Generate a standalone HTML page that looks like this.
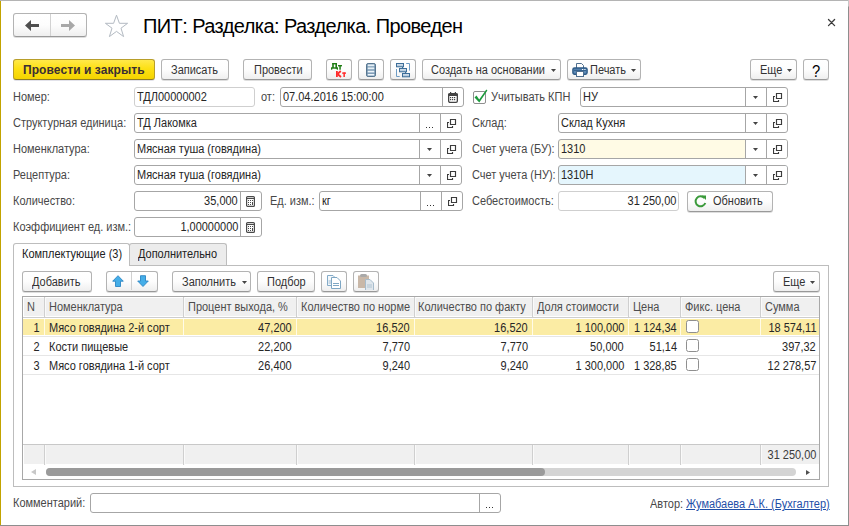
<!DOCTYPE html><html><head><meta charset="utf-8"><style>
html,body{margin:0;padding:0;background:#fff;}
body{width:849px;height:526px;overflow:hidden;position:relative;font-family:'Liberation Sans', sans-serif;}
</style></head><body>
<div style="position:absolute;left:0px;top:0px;width:849px;height:1px;background:#b4b4b4;"></div>
<div style="position:absolute;left:0px;top:1px;width:1px;height:525px;background:#c2a300;"></div>
<div style="position:absolute;left:848px;top:0px;width:1px;height:526px;background:linear-gradient(#c8c8c8 0px,#c8c8c8 6px,#8e8e8e 7px,#8e8e8e 100%);"></div>
<div style="position:absolute;left:0px;top:525px;width:849px;height:1px;background:#8e8e8e;"></div>
<div style="position:absolute;left:13px;top:13px;width:74px;height:24px;box-sizing:border-box;border:1px solid #b3b3b3;border-bottom-color:#999;border-radius:3px;background:linear-gradient(#ffffff 0%,#fdfdfd 50%,#efefef 100%);box-shadow:0 1px 0 #dedede;"></div>
<div style="position:absolute;left:50px;top:14px;width:1px;height:22px;background:#d2d2d2;"></div>
<svg style="position:absolute;left:25px;top:20px" width="14" height="11" viewBox="0 0 14 11"><path d="M0 5.5L6 0V4H14V7H6V11Z" fill="#4f4f4f"/></svg>
<svg style="position:absolute;left:61px;top:20px" width="14" height="11" viewBox="0 0 14 11"><path d="M14 5.5L8 0V4H0V7H8V11Z" fill="#a8a8a8"/></svg>
<svg style="position:absolute;left:104px;top:14px" width="26" height="24" viewBox="0 0 26 24"><path d="M12.5 1.2L15.4 9.3H23.6L17 14.2L19.6 22.6L12.5 17.4L5.4 22.6L8 14.2L1.4 9.3H9.6Z" fill="none" stroke="#b3bac2" stroke-width="1"/></svg>
<div style="position:absolute;left:143px;top:16px;font-size:20px;line-height:20px;color:#000;font-weight:400;letter-spacing:-0.58px;white-space:nowrap;transform-origin:left top;">ПИТ: Разделка: Разделка. Проведен</div>
<svg style="position:absolute;left:827px;top:18px" width="10" height="10" viewBox="0 0 10 10"><path d="M1.5 1.5L7.6 7.6M7.6 1.5L1.5 7.6" stroke="#3a3a3a" stroke-width="1.3" stroke-linecap="round"/></svg>
<div style="position:absolute;left:13px;top:59px;width:142px;height:21px;box-sizing:border-box;border:1px solid #b89e2a;border-bottom-color:#8f7d22;border-radius:3px;background:linear-gradient(#ffe94a 0%,#fde014 45%,#f5d400 100%);box-shadow:0 1px 0 #e2e2ea;"></div>
<div style="position:absolute;left:23px;top:64px;font-size:12px;line-height:12px;color:#3a2e34;font-weight:700;letter-spacing:0.08px;white-space:nowrap;transform-origin:left top;">Провести и закрыть</div>
<div style="position:absolute;left:161px;top:59px;width:68px;height:21px;box-sizing:border-box;border:1px solid #b3b3b3;border-bottom-color:#999;border-radius:3px;background:linear-gradient(#ffffff 0%,#fdfdfd 50%,#efefef 100%);box-shadow:0 1px 0 #dedede;"></div>
<div style="position:absolute;left:171px;top:64px;font-size:12px;line-height:12px;color:#333;font-weight:400;letter-spacing:0px;white-space:nowrap;transform:scaleX(0.915);transform-origin:left top;">Записать</div>
<div style="position:absolute;left:243px;top:59px;width:69px;height:21px;box-sizing:border-box;border:1px solid #b3b3b3;border-bottom-color:#999;border-radius:3px;background:linear-gradient(#ffffff 0%,#fdfdfd 50%,#efefef 100%);box-shadow:0 1px 0 #dedede;"></div>
<div style="position:absolute;left:254px;top:64px;font-size:12px;line-height:12px;color:#333;font-weight:400;letter-spacing:0px;white-space:nowrap;transform:scaleX(0.915);transform-origin:left top;">Провести</div>
<div style="position:absolute;left:326px;top:59px;width:26px;height:21px;box-sizing:border-box;border:1px solid #b3b3b3;border-bottom-color:#999;border-radius:3px;background:linear-gradient(#ffffff 0%,#fdfdfd 50%,#efefef 100%);box-shadow:0 1px 0 #dedede;"></div>
<svg style="position:absolute;left:330px;top:62px" width="22" height="16" viewBox="0 0 22 16"><g fill="#1f7d14"><rect x="2.3" y="1" width="4.6" height="1.4"/><rect x="2.2" y="1" width="1.6" height="5"/><rect x="5.4" y="1" width="1.6" height="5.5"/><rect x="1" y="5.3" width="7" height="1.4"/><rect x="1" y="6" width="1.3" height="1.7"/><rect x="6.7" y="6" width="1.3" height="1.7"/><rect x="8" y="3" width="4" height="1.4"/><rect x="9.3" y="3" width="1.5" height="4.7"/></g><g fill="#ff2b2b"><rect x="6" y="9" width="1.8" height="6"/><path d="M7.5 12L10.8 9M7.5 12L11 15" stroke="#ff2b2b" stroke-width="1.8"/><rect x="12.2" y="10.4" width="3.8" height="1.4"/><rect x="13.4" y="10.4" width="1.5" height="4.6"/></g></svg>
<div style="position:absolute;left:358px;top:59px;width:26px;height:21px;box-sizing:border-box;border:1px solid #b3b3b3;border-bottom-color:#999;border-radius:3px;background:linear-gradient(#ffffff 0%,#fdfdfd 50%,#efefef 100%);box-shadow:0 1px 0 #dedede;"></div>
<svg style="position:absolute;left:366px;top:63px" width="10" height="14" viewBox="0 0 10 14"><rect x="0.5" y="0.5" width="9" height="13" rx="1.6" fill="#6f8fab" stroke="#56758f"/><g fill="#d3e2ee"><rect x="1.6" y="1.5" width="6.8" height="1.9"/><rect x="1.6" y="4.5" width="6.8" height="1.9"/><rect x="1.6" y="7.7" width="6.8" height="1.9"/><rect x="1.6" y="10.8" width="6.8" height="1.9"/></g><g fill="#f2f8fc"><rect x="2" y="1.7" width="6" height="0.9"/><rect x="2" y="4.7" width="6" height="0.9"/><rect x="2" y="7.9" width="6" height="0.9"/><rect x="2" y="11" width="6" height="0.9"/></g></svg>
<div style="position:absolute;left:390px;top:59px;width:26px;height:21px;box-sizing:border-box;border:1px solid #b3b3b3;border-bottom-color:#999;border-radius:3px;background:linear-gradient(#ffffff 0%,#fdfdfd 50%,#efefef 100%);box-shadow:0 1px 0 #dedede;"></div>
<svg style="position:absolute;left:395px;top:63px" width="16" height="15" viewBox="0 0 16 15"><defs><linearGradient id="sg" x1="0" y1="0" x2="0" y2="1"><stop offset="0" stop-color="#dfe9f2"/><stop offset="1" stop-color="#a4bdd3"/></linearGradient></defs><path d="M11.2 0.5H14.5V7.6M1.5 6V13.5H4.7" fill="none" stroke="#6e9cc4"/><path d="M7.5 4V5M10.5 9V10" stroke="#3d6e99"/><rect x="1.5" y="0.5" width="7" height="3.3" fill="url(#sg)" stroke="#3d6e99"/><rect x="4.5" y="5.5" width="7" height="3.3" fill="url(#sg)" stroke="#3d6e99"/><rect x="7.5" y="10.5" width="7" height="3.3" fill="url(#sg)" stroke="#3d6e99"/></svg>
<div style="position:absolute;left:422px;top:59px;width:139px;height:21px;box-sizing:border-box;border:1px solid #b3b3b3;border-bottom-color:#999;border-radius:3px;background:linear-gradient(#ffffff 0%,#fdfdfd 50%,#efefef 100%);box-shadow:0 1px 0 #dedede;"></div>
<div style="position:absolute;left:431px;top:64px;font-size:12px;line-height:12px;color:#333;font-weight:400;letter-spacing:0px;white-space:nowrap;transform:scaleX(0.915);transform-origin:left top;">Создать на основании</div>
<svg style="position:absolute;left:551px;top:69px" width="5" height="3" viewBox="0 0 5 3"><path d="M0 0H5L2.5 3Z" fill="#444"/></svg>
<div style="position:absolute;left:567px;top:59px;width:74px;height:21px;box-sizing:border-box;border:1px solid #b3b3b3;border-bottom-color:#999;border-radius:3px;background:linear-gradient(#ffffff 0%,#fdfdfd 50%,#efefef 100%);box-shadow:0 1px 0 #dedede;"></div>
<svg style="position:absolute;left:572px;top:63px" width="16" height="14" viewBox="0 0 16 14"><path d="M4.5 5V0.5H9.5L11.5 2.5V5" fill="#fff" stroke="#4f6f8f"/><rect x="0.9" y="5" width="14.2" height="6.2" rx="1.6" fill="#5c89b6" stroke="#2d5a86" stroke-width="1.4"/><path d="M2 7.3H14" stroke="#2d5a86"/><rect x="10" y="6" width="1.2" height="1" fill="#fff"/><rect x="12.3" y="6" width="1.2" height="1" fill="#fff"/><rect x="4.5" y="8.5" width="7" height="5" fill="#fff" stroke="#4f6f8f"/></svg>
<div style="position:absolute;left:590px;top:64px;font-size:12px;line-height:12px;color:#333;font-weight:400;letter-spacing:0px;white-space:nowrap;transform:scaleX(0.915);transform-origin:left top;">Печать</div>
<svg style="position:absolute;left:631px;top:69px" width="5" height="3" viewBox="0 0 5 3"><path d="M0 0H5L2.5 3Z" fill="#444"/></svg>
<div style="position:absolute;left:750px;top:59px;width:47px;height:21px;box-sizing:border-box;border:1px solid #b3b3b3;border-bottom-color:#999;border-radius:3px;background:linear-gradient(#ffffff 0%,#fdfdfd 50%,#efefef 100%);box-shadow:0 1px 0 #dedede;"></div>
<div style="position:absolute;left:760px;top:64px;font-size:12px;line-height:12px;color:#333;font-weight:400;letter-spacing:0px;white-space:nowrap;transform:scaleX(0.915);transform-origin:left top;">Еще</div>
<svg style="position:absolute;left:787px;top:69px" width="5" height="3" viewBox="0 0 5 3"><path d="M0 0H5L2.5 3Z" fill="#444"/></svg>
<div style="position:absolute;left:803px;top:59px;width:26px;height:21px;box-sizing:border-box;border:1px solid #b3b3b3;border-bottom-color:#999;border-radius:3px;background:linear-gradient(#ffffff 0%,#fdfdfd 50%,#efefef 100%);box-shadow:0 1px 0 #dedede;"></div>
<div style="position:absolute;left:812px;top:64px;font-size:16px;line-height:16px;color:#000;font-weight:400;letter-spacing:0px;white-space:nowrap;transform:scaleX(0.92);transform-origin:left top;">?</div>
<div style="position:absolute;left:13px;top:91px;font-size:12px;line-height:12px;color:#474747;font-weight:400;letter-spacing:0px;white-space:nowrap;transform:scaleX(0.915);transform-origin:left top;">Номер:</div>
<div style="position:absolute;left:134px;top:87px;width:121px;height:20px;box-sizing:border-box;border:1px solid #cfcfcf;border-radius:3px;background:#fff;"></div>
<div style="position:absolute;left:137px;top:91px;font-size:12px;line-height:12px;color:#262626;font-weight:400;letter-spacing:0px;white-space:nowrap;transform:scaleX(0.915);transform-origin:left top;">ТДЛ00000002</div>
<div style="position:absolute;left:261px;top:91px;font-size:12px;line-height:12px;color:#474747;font-weight:400;letter-spacing:0px;white-space:nowrap;transform:scaleX(0.915);transform-origin:left top;">от:</div>
<div style="position:absolute;left:280px;top:87px;width:184px;height:20px;box-sizing:border-box;border:1px solid #a6a6a6;border-radius:3px;background:#fff;"></div>
<div style="position:absolute;left:442px;top:87px;width:1px;height:20px;background:#a6a6a6;"></div>
<svg style="position:absolute;left:448px;top:92px" width="10" height="11" viewBox="0 0 10 11"><rect x="0.65" y="1.65" width="8.7" height="8.7" rx="1.3" fill="#fff" stroke="#444" stroke-width="1.3"/><rect x="0" y="1.5" width="10" height="2.5" rx="1" fill="#444"/><rect x="2" y="0" width="1.2" height="2" fill="#444"/><rect x="6.8" y="0" width="1.2" height="2" fill="#444"/><rect x="2" y="5" width="1.2" height="1.2" fill="#444"/><rect x="4" y="5" width="1.2" height="1.2" fill="#444"/><rect x="6" y="5" width="1.2" height="1.2" fill="#444"/><rect x="2" y="7" width="1.2" height="1.2" fill="#444"/><rect x="4" y="7" width="1.2" height="1.2" fill="#444"/><rect x="6" y="7" width="1.2" height="1.2" fill="#444"/></svg>
<div style="position:absolute;left:283px;top:91px;font-size:12px;line-height:12px;color:#262626;font-weight:400;letter-spacing:0px;white-space:nowrap;transform:scaleX(0.915);transform-origin:left top;">07.04.2016 15:00:00</div>
<div style="position:absolute;left:473px;top:91px;width:13px;height:13px;box-sizing:border-box;border:1px solid #8f8f8f;border-radius:2px;background:#fff;"></div>
<svg style="position:absolute;left:474px;top:88px" width="14" height="15" viewBox="0 0 14 15"><path d="M0.5 9.4L5.3 14.4L13.4 2.6L12.3 1.6L5.2 11.4L2.5 7.6Z" fill="#1b9a3c"/></svg>
<div style="position:absolute;left:491px;top:91px;font-size:12px;line-height:12px;color:#474747;font-weight:400;letter-spacing:0px;white-space:nowrap;transform:scaleX(0.915);transform-origin:left top;">Учитывать КПН</div>
<div style="position:absolute;left:580px;top:87px;width:208px;height:20px;box-sizing:border-box;border:1px solid #a6a6a6;border-radius:3px;background:#fff;"></div>
<div style="position:absolute;left:766px;top:87px;width:1px;height:20px;background:#a6a6a6;"></div>
<svg style="position:absolute;left:773px;top:93px" width="10" height="10" viewBox="0 0 10 10"><path d="M3.5 0.5H8.5V5.5H3.5Z" fill="none" stroke="#3c3c3c" stroke-width="1.15"/><path d="M2 3.5H0.5V8.5H5.5V7" fill="none" stroke="#3c3c3c" stroke-width="1.15"/></svg>
<div style="position:absolute;left:745px;top:87px;width:1px;height:20px;background:#a6a6a6;"></div>
<svg style="position:absolute;left:753px;top:96px" width="5" height="3" viewBox="0 0 5 3"><path d="M0 0H5L2.5 3Z" fill="#444"/></svg>
<div style="position:absolute;left:583px;top:91px;font-size:12px;line-height:12px;color:#262626;font-weight:400;letter-spacing:0px;white-space:nowrap;transform:scaleX(0.915);transform-origin:left top;">НУ</div>
<div style="position:absolute;left:13px;top:117px;font-size:12px;line-height:12px;color:#474747;font-weight:400;letter-spacing:0px;white-space:nowrap;transform:scaleX(0.915);transform-origin:left top;">Структурная единица:</div>
<div style="position:absolute;left:134px;top:113px;width:328px;height:20px;box-sizing:border-box;border:1px solid #a6a6a6;border-radius:3px;background:#fff;"></div>
<div style="position:absolute;left:440px;top:113px;width:1px;height:20px;background:#a6a6a6;"></div>
<svg style="position:absolute;left:447px;top:119px" width="10" height="10" viewBox="0 0 10 10"><path d="M3.5 0.5H8.5V5.5H3.5Z" fill="none" stroke="#3c3c3c" stroke-width="1.15"/><path d="M2 3.5H0.5V8.5H5.5V7" fill="none" stroke="#3c3c3c" stroke-width="1.15"/></svg>
<div style="position:absolute;left:419px;top:113px;width:1px;height:20px;background:#a6a6a6;"></div>
<svg style="position:absolute;left:426px;top:127px" width="9" height="2" viewBox="0 0 9 2"><rect x="0" y="0" width="1" height="1" fill="#333"/><rect x="3" y="0" width="1" height="1" fill="#333"/><rect x="6" y="0" width="1" height="1" fill="#333"/></svg>
<div style="position:absolute;left:137px;top:117px;font-size:12px;line-height:12px;color:#262626;font-weight:400;letter-spacing:0px;white-space:nowrap;transform:scaleX(0.915);transform-origin:left top;">ТД Лакомка</div>
<div style="position:absolute;left:472px;top:117px;font-size:12px;line-height:12px;color:#474747;font-weight:400;letter-spacing:0px;white-space:nowrap;transform:scaleX(0.915);transform-origin:left top;">Склад:</div>
<div style="position:absolute;left:558px;top:113px;width:230px;height:20px;box-sizing:border-box;border:1px solid #a6a6a6;border-radius:3px;background:#fff;"></div>
<div style="position:absolute;left:766px;top:113px;width:1px;height:20px;background:#a6a6a6;"></div>
<svg style="position:absolute;left:773px;top:119px" width="10" height="10" viewBox="0 0 10 10"><path d="M3.5 0.5H8.5V5.5H3.5Z" fill="none" stroke="#3c3c3c" stroke-width="1.15"/><path d="M2 3.5H0.5V8.5H5.5V7" fill="none" stroke="#3c3c3c" stroke-width="1.15"/></svg>
<div style="position:absolute;left:745px;top:113px;width:1px;height:20px;background:#a6a6a6;"></div>
<svg style="position:absolute;left:753px;top:122px" width="5" height="3" viewBox="0 0 5 3"><path d="M0 0H5L2.5 3Z" fill="#444"/></svg>
<div style="position:absolute;left:561px;top:117px;font-size:12px;line-height:12px;color:#262626;font-weight:400;letter-spacing:0px;white-space:nowrap;transform:scaleX(0.915);transform-origin:left top;">Склад Кухня</div>
<div style="position:absolute;left:13px;top:143px;font-size:12px;line-height:12px;color:#474747;font-weight:400;letter-spacing:0px;white-space:nowrap;transform:scaleX(0.915);transform-origin:left top;">Номенклатура:</div>
<div style="position:absolute;left:134px;top:139px;width:328px;height:20px;box-sizing:border-box;border:1px solid #a6a6a6;border-radius:3px;background:#fff;"></div>
<div style="position:absolute;left:440px;top:139px;width:1px;height:20px;background:#a6a6a6;"></div>
<svg style="position:absolute;left:447px;top:145px" width="10" height="10" viewBox="0 0 10 10"><path d="M3.5 0.5H8.5V5.5H3.5Z" fill="none" stroke="#3c3c3c" stroke-width="1.15"/><path d="M2 3.5H0.5V8.5H5.5V7" fill="none" stroke="#3c3c3c" stroke-width="1.15"/></svg>
<div style="position:absolute;left:419px;top:139px;width:1px;height:20px;background:#a6a6a6;"></div>
<svg style="position:absolute;left:427px;top:148px" width="5" height="3" viewBox="0 0 5 3"><path d="M0 0H5L2.5 3Z" fill="#444"/></svg>
<div style="position:absolute;left:137px;top:143px;font-size:12px;line-height:12px;color:#262626;font-weight:400;letter-spacing:0px;white-space:nowrap;transform:scaleX(0.915);transform-origin:left top;">Мясная туша (говядина)</div>
<div style="position:absolute;left:472px;top:143px;font-size:12px;line-height:12px;color:#474747;font-weight:400;letter-spacing:0px;white-space:nowrap;transform:scaleX(0.915);transform-origin:left top;">Счет учета (БУ):</div>
<div style="position:absolute;left:558px;top:139px;width:230px;height:20px;box-sizing:border-box;border:1px solid #a6a6a6;border-radius:3px;background:#fff;background:#fffbe5;"></div>
<div style="position:absolute;left:745px;top:140px;width:42px;height:18px;background:#fff;border-radius:0 2px 2px 0;"></div>
<div style="position:absolute;left:766px;top:139px;width:1px;height:20px;background:#a6a6a6;"></div>
<svg style="position:absolute;left:773px;top:145px" width="10" height="10" viewBox="0 0 10 10"><path d="M3.5 0.5H8.5V5.5H3.5Z" fill="none" stroke="#3c3c3c" stroke-width="1.15"/><path d="M2 3.5H0.5V8.5H5.5V7" fill="none" stroke="#3c3c3c" stroke-width="1.15"/></svg>
<div style="position:absolute;left:745px;top:139px;width:1px;height:20px;background:#a6a6a6;"></div>
<svg style="position:absolute;left:753px;top:148px" width="5" height="3" viewBox="0 0 5 3"><path d="M0 0H5L2.5 3Z" fill="#444"/></svg>
<div style="position:absolute;left:561px;top:143px;font-size:12px;line-height:12px;color:#262626;font-weight:400;letter-spacing:0px;white-space:nowrap;transform:scaleX(0.915);transform-origin:left top;">1310</div>
<div style="position:absolute;left:13px;top:169px;font-size:12px;line-height:12px;color:#474747;font-weight:400;letter-spacing:0px;white-space:nowrap;transform:scaleX(0.915);transform-origin:left top;">Рецептура:</div>
<div style="position:absolute;left:134px;top:165px;width:328px;height:20px;box-sizing:border-box;border:1px solid #a6a6a6;border-radius:3px;background:#fff;"></div>
<div style="position:absolute;left:440px;top:165px;width:1px;height:20px;background:#a6a6a6;"></div>
<svg style="position:absolute;left:447px;top:171px" width="10" height="10" viewBox="0 0 10 10"><path d="M3.5 0.5H8.5V5.5H3.5Z" fill="none" stroke="#3c3c3c" stroke-width="1.15"/><path d="M2 3.5H0.5V8.5H5.5V7" fill="none" stroke="#3c3c3c" stroke-width="1.15"/></svg>
<div style="position:absolute;left:419px;top:165px;width:1px;height:20px;background:#a6a6a6;"></div>
<svg style="position:absolute;left:427px;top:174px" width="5" height="3" viewBox="0 0 5 3"><path d="M0 0H5L2.5 3Z" fill="#444"/></svg>
<div style="position:absolute;left:137px;top:169px;font-size:12px;line-height:12px;color:#262626;font-weight:400;letter-spacing:0px;white-space:nowrap;transform:scaleX(0.915);transform-origin:left top;">Мясная туша (говядина)</div>
<div style="position:absolute;left:472px;top:169px;font-size:12px;line-height:12px;color:#474747;font-weight:400;letter-spacing:0px;white-space:nowrap;transform:scaleX(0.915);transform-origin:left top;">Счет учета (НУ):</div>
<div style="position:absolute;left:558px;top:165px;width:230px;height:20px;box-sizing:border-box;border:1px solid #a6a6a6;border-radius:3px;background:#fff;background:#e5f6fd;"></div>
<div style="position:absolute;left:745px;top:166px;width:42px;height:18px;background:#fff;border-radius:0 2px 2px 0;"></div>
<div style="position:absolute;left:766px;top:165px;width:1px;height:20px;background:#a6a6a6;"></div>
<svg style="position:absolute;left:773px;top:171px" width="10" height="10" viewBox="0 0 10 10"><path d="M3.5 0.5H8.5V5.5H3.5Z" fill="none" stroke="#3c3c3c" stroke-width="1.15"/><path d="M2 3.5H0.5V8.5H5.5V7" fill="none" stroke="#3c3c3c" stroke-width="1.15"/></svg>
<div style="position:absolute;left:745px;top:165px;width:1px;height:20px;background:#a6a6a6;"></div>
<svg style="position:absolute;left:753px;top:174px" width="5" height="3" viewBox="0 0 5 3"><path d="M0 0H5L2.5 3Z" fill="#444"/></svg>
<div style="position:absolute;left:561px;top:169px;font-size:12px;line-height:12px;color:#262626;font-weight:400;letter-spacing:0px;white-space:nowrap;transform:scaleX(0.915);transform-origin:left top;">1310Н</div>
<div style="position:absolute;left:13px;top:195px;font-size:12px;line-height:12px;color:#474747;font-weight:400;letter-spacing:0px;white-space:nowrap;transform:scaleX(0.915);transform-origin:left top;">Количество:</div>
<div style="position:absolute;left:134px;top:191px;width:128px;height:20px;box-sizing:border-box;border:1px solid #a6a6a6;border-radius:3px;background:#fff;"></div>
<div style="position:absolute;left:240px;top:191px;width:1px;height:20px;background:#a6a6a6;"></div>
<svg style="position:absolute;left:246px;top:196px" width="10" height="11" viewBox="0 0 10 11"><rect x="0.6" y="0.6" width="7.8" height="9.8" rx="1" fill="#fff" stroke="#4a4a4a" stroke-width="1.2"/><path d="M1 2.5H8" stroke="#4a4a4a" stroke-width="1"/><rect x="2" y="4" width="1" height="1" fill="#4a4a4a"/><rect x="4" y="4" width="1" height="1" fill="#4a4a4a"/><rect x="6" y="4" width="1" height="1" fill="#4a4a4a"/><rect x="2" y="6" width="1" height="1" fill="#4a4a4a"/><rect x="4" y="6" width="1" height="1" fill="#4a4a4a"/><rect x="2" y="8" width="1" height="1" fill="#4a4a4a"/><rect x="4" y="8" width="1" height="1" fill="#4a4a4a"/><rect x="6" y="6" width="1" height="3" fill="#4a4a4a"/></svg>
<div style="position:absolute;right:611px;top:195px;font-size:12px;line-height:12px;color:#262626;font-weight:400;letter-spacing:0px;white-space:nowrap;text-align:right;transform:scaleX(0.915);transform-origin:right top;">35,000</div>
<div style="position:absolute;left:270px;top:195px;font-size:12px;line-height:12px;color:#474747;font-weight:400;letter-spacing:0px;white-space:nowrap;transform:scaleX(0.915);transform-origin:left top;">Ед. изм.:</div>
<div style="position:absolute;left:319px;top:191px;width:144px;height:20px;box-sizing:border-box;border:1px solid #a6a6a6;border-radius:3px;background:#fff;"></div>
<div style="position:absolute;left:441px;top:191px;width:1px;height:20px;background:#a6a6a6;"></div>
<svg style="position:absolute;left:448px;top:197px" width="10" height="10" viewBox="0 0 10 10"><path d="M3.5 0.5H8.5V5.5H3.5Z" fill="none" stroke="#3c3c3c" stroke-width="1.15"/><path d="M2 3.5H0.5V8.5H5.5V7" fill="none" stroke="#3c3c3c" stroke-width="1.15"/></svg>
<div style="position:absolute;left:420px;top:191px;width:1px;height:20px;background:#a6a6a6;"></div>
<svg style="position:absolute;left:427px;top:205px" width="9" height="2" viewBox="0 0 9 2"><rect x="0" y="0" width="1" height="1" fill="#333"/><rect x="3" y="0" width="1" height="1" fill="#333"/><rect x="6" y="0" width="1" height="1" fill="#333"/></svg>
<div style="position:absolute;left:322px;top:195px;font-size:12px;line-height:12px;color:#262626;font-weight:400;letter-spacing:0px;white-space:nowrap;transform:scaleX(0.915);transform-origin:left top;">кг</div>
<div style="position:absolute;left:472px;top:195px;font-size:12px;line-height:12px;color:#474747;font-weight:400;letter-spacing:0px;white-space:nowrap;transform:scaleX(0.915);transform-origin:left top;">Себестоимость:</div>
<div style="position:absolute;left:558px;top:191px;width:121px;height:20px;box-sizing:border-box;border:1px solid #cfcfcf;border-radius:3px;background:#fff;"></div>
<div style="position:absolute;right:173px;top:195px;font-size:12px;line-height:12px;color:#262626;font-weight:400;letter-spacing:0px;white-space:nowrap;text-align:right;transform:scaleX(0.915);transform-origin:right top;">31 250,00</div>
<div style="position:absolute;left:687px;top:191px;width:86px;height:21px;box-sizing:border-box;border:1px solid #b3b3b3;border-bottom-color:#999;border-radius:3px;background:linear-gradient(#ffffff 0%,#fdfdfd 50%,#efefef 100%);box-shadow:0 1px 0 #dedede;"></div>
<svg style="position:absolute;left:694px;top:195px" width="13" height="13" viewBox="0 0 13 13"><path d="M10.5 3.2A5 5 0 1 0 11.3 8" fill="none" stroke="#3a9a3a" stroke-width="2"/><path d="M7.5 0.5H12V5Z" fill="#3a9a3a"/></svg>
<div style="position:absolute;left:713px;top:195px;font-size:12px;line-height:12px;color:#333;font-weight:400;letter-spacing:0px;white-space:nowrap;transform:scaleX(0.915);transform-origin:left top;">Обновить</div>
<div style="position:absolute;left:13px;top:221px;font-size:12px;line-height:12px;color:#474747;font-weight:400;letter-spacing:0px;white-space:nowrap;transform:scaleX(0.915);transform-origin:left top;">Коэффициент ед. изм.:</div>
<div style="position:absolute;left:134px;top:217px;width:128px;height:20px;box-sizing:border-box;border:1px solid #a6a6a6;border-radius:3px;background:#fff;"></div>
<div style="position:absolute;left:240px;top:217px;width:1px;height:20px;background:#a6a6a6;"></div>
<svg style="position:absolute;left:246px;top:222px" width="10" height="11" viewBox="0 0 10 11"><rect x="0.6" y="0.6" width="7.8" height="9.8" rx="1" fill="#fff" stroke="#4a4a4a" stroke-width="1.2"/><path d="M1 2.5H8" stroke="#4a4a4a" stroke-width="1"/><rect x="2" y="4" width="1" height="1" fill="#4a4a4a"/><rect x="4" y="4" width="1" height="1" fill="#4a4a4a"/><rect x="6" y="4" width="1" height="1" fill="#4a4a4a"/><rect x="2" y="6" width="1" height="1" fill="#4a4a4a"/><rect x="4" y="6" width="1" height="1" fill="#4a4a4a"/><rect x="2" y="8" width="1" height="1" fill="#4a4a4a"/><rect x="4" y="8" width="1" height="1" fill="#4a4a4a"/><rect x="6" y="6" width="1" height="3" fill="#4a4a4a"/></svg>
<div style="position:absolute;right:611px;top:221px;font-size:12px;line-height:12px;color:#262626;font-weight:400;letter-spacing:0px;white-space:nowrap;text-align:right;transform:scaleX(0.915);transform-origin:right top;">1,00000000</div>
<div style="position:absolute;left:13px;top:265px;width:816px;height:222px;box-sizing:border-box;border:1px solid #bdbdbd;background:#fff;"></div>
<div style="position:absolute;left:129px;top:243px;width:98px;height:22px;box-sizing:border-box;border:1px solid #bdbdbd;border-bottom:none;border-radius:3px 3px 0 0;background:#ececec;"></div>
<div style="position:absolute;left:13px;top:243px;width:117px;height:23px;box-sizing:border-box;border:1px solid #bdbdbd;border-bottom:none;border-radius:3px 3px 0 0;background:#fff;"></div>
<div style="position:absolute;left:22px;top:248px;font-size:12px;line-height:12px;color:#222;font-weight:400;letter-spacing:0px;white-space:nowrap;transform:scaleX(0.915);transform-origin:left top;">Комплектующие (3)</div>
<div style="position:absolute;left:138px;top:248px;font-size:12px;line-height:12px;color:#222;font-weight:400;letter-spacing:0px;white-space:nowrap;transform:scaleX(0.915);transform-origin:left top;">Дополнительно</div>
<div style="position:absolute;left:22px;top:271px;width:70px;height:21px;box-sizing:border-box;border:1px solid #b3b3b3;border-bottom-color:#999;border-radius:3px;background:linear-gradient(#ffffff 0%,#fdfdfd 50%,#efefef 100%);box-shadow:0 1px 0 #dedede;"></div>
<div style="position:absolute;left:32px;top:276px;font-size:12px;line-height:12px;color:#333;font-weight:400;letter-spacing:0px;white-space:nowrap;transform:scaleX(0.915);transform-origin:left top;">Добавить</div>
<div style="position:absolute;left:106px;top:271px;width:52px;height:21px;box-sizing:border-box;border:1px solid #b3b3b3;border-bottom-color:#999;border-radius:3px;background:linear-gradient(#ffffff 0%,#fdfdfd 50%,#efefef 100%);box-shadow:0 1px 0 #dedede;"></div>
<div style="position:absolute;left:131px;top:272px;width:1px;height:18px;background:#d0d0d0;"></div>
<svg style="position:absolute;left:112px;top:275px" width="13" height="14" viewBox="0 0 13 14"><path d="M6 0.7L11.3 6.2H8.5V11.5H3.5V6.2H0.7Z" fill="#45aee8" stroke="#2b86c4" stroke-width="0.9"/></svg>
<svg style="position:absolute;left:137px;top:275px" width="13" height="14" viewBox="0 0 13 14"><path d="M6 11.5L11.3 6H8.5V0.7H3.5V6H0.7Z" fill="#45aee8" stroke="#2b86c4" stroke-width="0.9"/></svg>
<div style="position:absolute;left:172px;top:271px;width:79px;height:21px;box-sizing:border-box;border:1px solid #b3b3b3;border-bottom-color:#999;border-radius:3px;background:linear-gradient(#ffffff 0%,#fdfdfd 50%,#efefef 100%);box-shadow:0 1px 0 #dedede;"></div>
<div style="position:absolute;left:182px;top:276px;font-size:12px;line-height:12px;color:#333;font-weight:400;letter-spacing:0px;white-space:nowrap;transform:scaleX(0.915);transform-origin:left top;">Заполнить</div>
<svg style="position:absolute;left:242px;top:281px" width="5" height="3" viewBox="0 0 5 3"><path d="M0 0H5L2.5 3Z" fill="#444"/></svg>
<div style="position:absolute;left:257px;top:271px;width:58px;height:21px;box-sizing:border-box;border:1px solid #b3b3b3;border-bottom-color:#999;border-radius:3px;background:linear-gradient(#ffffff 0%,#fdfdfd 50%,#efefef 100%);box-shadow:0 1px 0 #dedede;"></div>
<div style="position:absolute;left:267px;top:276px;font-size:12px;line-height:12px;color:#333;font-weight:400;letter-spacing:0px;white-space:nowrap;transform:scaleX(0.915);transform-origin:left top;">Подбор</div>
<div style="position:absolute;left:321px;top:271px;width:26px;height:21px;box-sizing:border-box;border:1px solid #b3b3b3;border-bottom-color:#999;border-radius:3px;background:linear-gradient(#ffffff 0%,#fdfdfd 50%,#efefef 100%);box-shadow:0 1px 0 #dedede;"></div>
<svg style="position:absolute;left:327px;top:275px" width="15" height="15" viewBox="0 0 15 15"><path d="M0.5 0.5H6L7.5 2V10.5H0.5Z" fill="#f4f8fb" stroke="#84abc8"/><path d="M1.5 6H4M1.5 8H4" stroke="#9bb9d0"/><path d="M4.5 2.5H10L13.5 6V13.5H4.5Z" fill="#fff" stroke="#7ea7c4"/><path d="M6 8.5H12M6 10.5H12" stroke="#7ea7c4"/></svg>
<div style="position:absolute;left:353px;top:271px;width:26px;height:21px;box-sizing:border-box;border:1px solid #b3b3b3;border-bottom-color:#999;border-radius:3px;background:linear-gradient(#ffffff 0%,#fdfdfd 50%,#efefef 100%);box-shadow:0 1px 0 #dedede;"></div>
<svg style="position:absolute;left:358px;top:274px" width="16" height="16" viewBox="0 0 16 16"><rect x="0" y="1.5" width="11" height="12.5" fill="#c9b8a8"/><rect x="2" y="0" width="7" height="3" rx="1.5" fill="#a9a9a9"/><path d="M7.5 5.5H12L15.5 9V16.5H7.5Z" fill="#dfe6ec" stroke="#a6bccc"/><path d="M9 11H14M9 13H14" stroke="#b0c4d2"/></svg>
<div style="position:absolute;left:773px;top:271px;width:47px;height:21px;box-sizing:border-box;border:1px solid #b3b3b3;border-bottom-color:#999;border-radius:3px;background:linear-gradient(#ffffff 0%,#fdfdfd 50%,#efefef 100%);box-shadow:0 1px 0 #dedede;"></div>
<div style="position:absolute;left:783px;top:276px;font-size:12px;line-height:12px;color:#333;font-weight:400;letter-spacing:0px;white-space:nowrap;transform:scaleX(0.915);transform-origin:left top;">Еще</div>
<svg style="position:absolute;left:810px;top:281px" width="5" height="3" viewBox="0 0 5 3"><path d="M0 0H5L2.5 3Z" fill="#444"/></svg>
<div style="position:absolute;left:22px;top:296px;width:798px;height:184px;box-sizing:border-box;border:1px solid #a8a8a8;background:#fff;"></div>
<div style="position:absolute;left:24px;top:298px;width:795px;height:18px;background:#f0f0f0;"></div>
<div style="position:absolute;left:23px;top:317px;width:796px;height:1px;background:#cdcdcd;"></div>
<div style="position:absolute;left:44px;top:297px;width:1px;height:20px;background:#cfcfcf;"></div>
<div style="position:absolute;left:45px;top:297px;width:1px;height:20px;background:#fafafa;"></div>
<div style="position:absolute;left:183px;top:297px;width:1px;height:20px;background:#cfcfcf;"></div>
<div style="position:absolute;left:184px;top:297px;width:1px;height:20px;background:#fafafa;"></div>
<div style="position:absolute;left:296px;top:297px;width:1px;height:20px;background:#cfcfcf;"></div>
<div style="position:absolute;left:297px;top:297px;width:1px;height:20px;background:#fafafa;"></div>
<div style="position:absolute;left:414px;top:297px;width:1px;height:20px;background:#cfcfcf;"></div>
<div style="position:absolute;left:415px;top:297px;width:1px;height:20px;background:#fafafa;"></div>
<div style="position:absolute;left:532px;top:297px;width:1px;height:20px;background:#cfcfcf;"></div>
<div style="position:absolute;left:533px;top:297px;width:1px;height:20px;background:#fafafa;"></div>
<div style="position:absolute;left:628px;top:297px;width:1px;height:20px;background:#cfcfcf;"></div>
<div style="position:absolute;left:629px;top:297px;width:1px;height:20px;background:#fafafa;"></div>
<div style="position:absolute;left:680px;top:297px;width:1px;height:20px;background:#cfcfcf;"></div>
<div style="position:absolute;left:681px;top:297px;width:1px;height:20px;background:#fafafa;"></div>
<div style="position:absolute;left:760px;top:297px;width:1px;height:20px;background:#cfcfcf;"></div>
<div style="position:absolute;left:761px;top:297px;width:1px;height:20px;background:#fafafa;"></div>
<div style="position:absolute;left:27px;top:301px;font-size:12px;line-height:12px;color:#4d4d4d;font-weight:400;letter-spacing:0px;white-space:nowrap;transform:scaleX(0.915);transform-origin:left top;">N</div>
<div style="position:absolute;left:49px;top:301px;font-size:12px;line-height:12px;color:#4d4d4d;font-weight:400;letter-spacing:0px;white-space:nowrap;transform:scaleX(0.915);transform-origin:left top;">Номенклатура</div>
<div style="position:absolute;left:188px;top:301px;font-size:12px;line-height:12px;color:#4d4d4d;font-weight:400;letter-spacing:0px;white-space:nowrap;transform:scaleX(0.915);transform-origin:left top;">Процент выхода, %</div>
<div style="position:absolute;left:301px;top:301px;font-size:12px;line-height:12px;color:#4d4d4d;font-weight:400;letter-spacing:0px;white-space:nowrap;transform:scaleX(0.915);transform-origin:left top;">Количество по норме</div>
<div style="position:absolute;left:418px;top:301px;font-size:12px;line-height:12px;color:#4d4d4d;font-weight:400;letter-spacing:0px;white-space:nowrap;transform:scaleX(0.915);transform-origin:left top;">Количество по факту</div>
<div style="position:absolute;left:537px;top:301px;font-size:12px;line-height:12px;color:#4d4d4d;font-weight:400;letter-spacing:0px;white-space:nowrap;transform:scaleX(0.915);transform-origin:left top;">Доля стоимости</div>
<div style="position:absolute;left:633px;top:301px;font-size:12px;line-height:12px;color:#4d4d4d;font-weight:400;letter-spacing:0px;white-space:nowrap;transform:scaleX(0.915);transform-origin:left top;">Цена</div>
<div style="position:absolute;left:685px;top:301px;font-size:12px;line-height:12px;color:#4d4d4d;font-weight:400;letter-spacing:0px;white-space:nowrap;transform:scaleX(0.915);transform-origin:left top;">Фикс. цена</div>
<div style="position:absolute;left:765px;top:301px;font-size:12px;line-height:12px;color:#4d4d4d;font-weight:400;letter-spacing:0px;white-space:nowrap;transform:scaleX(0.915);transform-origin:left top;">Сумма</div>
<div style="position:absolute;left:23px;top:319px;width:796px;height:16px;background:#fbeca4;"></div>
<div style="position:absolute;left:44px;top:319px;width:1px;height:16px;background:#fffbe8;"></div>
<div style="position:absolute;left:183px;top:319px;width:1px;height:16px;background:#fffbe8;"></div>
<div style="position:absolute;left:296px;top:319px;width:1px;height:16px;background:#fffbe8;"></div>
<div style="position:absolute;left:414px;top:319px;width:1px;height:16px;background:#fffbe8;"></div>
<div style="position:absolute;left:532px;top:319px;width:1px;height:16px;background:#fffbe8;"></div>
<div style="position:absolute;left:628px;top:319px;width:1px;height:16px;background:#fffbe8;"></div>
<div style="position:absolute;left:680px;top:319px;width:1px;height:16px;background:#fffbe8;"></div>
<div style="position:absolute;left:760px;top:319px;width:1px;height:16px;background:#fffbe8;"></div>
<div style="position:absolute;left:23px;top:336px;width:796px;height:1px;background:#e6e6e6;"></div>
<div style="position:absolute;right:809px;top:322px;font-size:12px;line-height:12px;color:#262626;font-weight:400;letter-spacing:0px;white-space:nowrap;text-align:right;transform:scaleX(0.915);transform-origin:right top;">1</div>
<div style="position:absolute;left:49px;top:322px;font-size:12px;line-height:12px;color:#262626;font-weight:400;letter-spacing:0px;white-space:nowrap;transform:scaleX(0.915);transform-origin:left top;">Мясо говядина 2-й сорт</div>
<div style="position:absolute;right:557px;top:322px;font-size:12px;line-height:12px;color:#262626;font-weight:400;letter-spacing:0px;white-space:nowrap;text-align:right;transform:scaleX(0.915);transform-origin:right top;">47,200</div>
<div style="position:absolute;right:439px;top:322px;font-size:12px;line-height:12px;color:#262626;font-weight:400;letter-spacing:0px;white-space:nowrap;text-align:right;transform:scaleX(0.915);transform-origin:right top;">16,520</div>
<div style="position:absolute;right:321px;top:322px;font-size:12px;line-height:12px;color:#262626;font-weight:400;letter-spacing:0px;white-space:nowrap;text-align:right;transform:scaleX(0.915);transform-origin:right top;">16,520</div>
<div style="position:absolute;right:225px;top:322px;font-size:12px;line-height:12px;color:#262626;font-weight:400;letter-spacing:0px;white-space:nowrap;text-align:right;transform:scaleX(0.915);transform-origin:right top;">1 100,000</div>
<div style="position:absolute;right:172px;top:322px;font-size:12px;line-height:12px;color:#262626;font-weight:400;letter-spacing:0px;white-space:nowrap;text-align:right;transform:scaleX(0.915);transform-origin:right top;">1 124,34</div>
<div style="position:absolute;left:686px;top:320px;width:13px;height:13px;box-sizing:border-box;border:1px solid #8f8f8f;border-radius:2.5px;background:#fff;"></div>
<div style="position:absolute;right:33px;top:322px;font-size:12px;line-height:12px;color:#262626;font-weight:400;letter-spacing:0px;white-space:nowrap;text-align:right;transform:scaleX(0.915);transform-origin:right top;">18 574,11</div>
<div style="position:absolute;left:23px;top:355px;width:796px;height:1px;background:#e6e6e6;"></div>
<div style="position:absolute;right:809px;top:341px;font-size:12px;line-height:12px;color:#262626;font-weight:400;letter-spacing:0px;white-space:nowrap;text-align:right;transform:scaleX(0.915);transform-origin:right top;">2</div>
<div style="position:absolute;left:49px;top:341px;font-size:12px;line-height:12px;color:#262626;font-weight:400;letter-spacing:0px;white-space:nowrap;transform:scaleX(0.915);transform-origin:left top;">Кости пищевые</div>
<div style="position:absolute;right:557px;top:341px;font-size:12px;line-height:12px;color:#262626;font-weight:400;letter-spacing:0px;white-space:nowrap;text-align:right;transform:scaleX(0.915);transform-origin:right top;">22,200</div>
<div style="position:absolute;right:439px;top:341px;font-size:12px;line-height:12px;color:#262626;font-weight:400;letter-spacing:0px;white-space:nowrap;text-align:right;transform:scaleX(0.915);transform-origin:right top;">7,770</div>
<div style="position:absolute;right:321px;top:341px;font-size:12px;line-height:12px;color:#262626;font-weight:400;letter-spacing:0px;white-space:nowrap;text-align:right;transform:scaleX(0.915);transform-origin:right top;">7,770</div>
<div style="position:absolute;right:225px;top:341px;font-size:12px;line-height:12px;color:#262626;font-weight:400;letter-spacing:0px;white-space:nowrap;text-align:right;transform:scaleX(0.915);transform-origin:right top;">50,000</div>
<div style="position:absolute;right:172px;top:341px;font-size:12px;line-height:12px;color:#262626;font-weight:400;letter-spacing:0px;white-space:nowrap;text-align:right;transform:scaleX(0.915);transform-origin:right top;">51,14</div>
<div style="position:absolute;left:686px;top:339px;width:13px;height:13px;box-sizing:border-box;border:1px solid #8f8f8f;border-radius:2.5px;background:#fff;"></div>
<div style="position:absolute;right:33px;top:341px;font-size:12px;line-height:12px;color:#262626;font-weight:400;letter-spacing:0px;white-space:nowrap;text-align:right;transform:scaleX(0.915);transform-origin:right top;">397,32</div>
<div style="position:absolute;left:23px;top:374px;width:796px;height:1px;background:#e6e6e6;"></div>
<div style="position:absolute;right:809px;top:360px;font-size:12px;line-height:12px;color:#262626;font-weight:400;letter-spacing:0px;white-space:nowrap;text-align:right;transform:scaleX(0.915);transform-origin:right top;">3</div>
<div style="position:absolute;left:49px;top:360px;font-size:12px;line-height:12px;color:#262626;font-weight:400;letter-spacing:0px;white-space:nowrap;transform:scaleX(0.915);transform-origin:left top;">Мясо говядина 1-й сорт</div>
<div style="position:absolute;right:557px;top:360px;font-size:12px;line-height:12px;color:#262626;font-weight:400;letter-spacing:0px;white-space:nowrap;text-align:right;transform:scaleX(0.915);transform-origin:right top;">26,400</div>
<div style="position:absolute;right:439px;top:360px;font-size:12px;line-height:12px;color:#262626;font-weight:400;letter-spacing:0px;white-space:nowrap;text-align:right;transform:scaleX(0.915);transform-origin:right top;">9,240</div>
<div style="position:absolute;right:321px;top:360px;font-size:12px;line-height:12px;color:#262626;font-weight:400;letter-spacing:0px;white-space:nowrap;text-align:right;transform:scaleX(0.915);transform-origin:right top;">9,240</div>
<div style="position:absolute;right:225px;top:360px;font-size:12px;line-height:12px;color:#262626;font-weight:400;letter-spacing:0px;white-space:nowrap;text-align:right;transform:scaleX(0.915);transform-origin:right top;">1 300,000</div>
<div style="position:absolute;right:172px;top:360px;font-size:12px;line-height:12px;color:#262626;font-weight:400;letter-spacing:0px;white-space:nowrap;text-align:right;transform:scaleX(0.915);transform-origin:right top;">1 328,85</div>
<div style="position:absolute;left:686px;top:358px;width:13px;height:13px;box-sizing:border-box;border:1px solid #8f8f8f;border-radius:2.5px;background:#fff;"></div>
<div style="position:absolute;right:33px;top:360px;font-size:12px;line-height:12px;color:#262626;font-weight:400;letter-spacing:0px;white-space:nowrap;text-align:right;transform:scaleX(0.915);transform-origin:right top;">12 278,57</div>
<div style="position:absolute;left:23px;top:444px;width:796px;height:1px;background:#c8c8c8;"></div>
<div style="position:absolute;left:24px;top:445px;width:795px;height:19px;background:#f0f0f0;"></div>
<div style="position:absolute;left:44px;top:445px;width:1px;height:20px;background:#cfcfcf;"></div>
<div style="position:absolute;left:45px;top:445px;width:1px;height:20px;background:#fafafa;"></div>
<div style="position:absolute;left:183px;top:445px;width:1px;height:20px;background:#cfcfcf;"></div>
<div style="position:absolute;left:184px;top:445px;width:1px;height:20px;background:#fafafa;"></div>
<div style="position:absolute;left:296px;top:445px;width:1px;height:20px;background:#cfcfcf;"></div>
<div style="position:absolute;left:297px;top:445px;width:1px;height:20px;background:#fafafa;"></div>
<div style="position:absolute;left:414px;top:445px;width:1px;height:20px;background:#cfcfcf;"></div>
<div style="position:absolute;left:415px;top:445px;width:1px;height:20px;background:#fafafa;"></div>
<div style="position:absolute;left:532px;top:445px;width:1px;height:20px;background:#cfcfcf;"></div>
<div style="position:absolute;left:533px;top:445px;width:1px;height:20px;background:#fafafa;"></div>
<div style="position:absolute;left:628px;top:445px;width:1px;height:20px;background:#cfcfcf;"></div>
<div style="position:absolute;left:629px;top:445px;width:1px;height:20px;background:#fafafa;"></div>
<div style="position:absolute;left:680px;top:445px;width:1px;height:20px;background:#cfcfcf;"></div>
<div style="position:absolute;left:681px;top:445px;width:1px;height:20px;background:#fafafa;"></div>
<div style="position:absolute;left:760px;top:445px;width:1px;height:20px;background:#cfcfcf;"></div>
<div style="position:absolute;left:761px;top:445px;width:1px;height:20px;background:#fafafa;"></div>
<div style="position:absolute;right:33px;top:449px;font-size:12px;line-height:12px;color:#3a3a3a;font-weight:400;letter-spacing:0px;white-space:nowrap;text-align:right;transform:scaleX(0.915);transform-origin:right top;">31 250,00</div>
<svg style="position:absolute;left:31px;top:469px" width="5" height="6" viewBox="0 0 5 6"><path d="M5 0V6L0 3Z" fill="#c8c8c8"/></svg>
<div style="position:absolute;left:46px;top:468px;width:750px;height:8px;background:#d4d4d4;border-radius:4px;"></div>
<div style="position:absolute;left:46px;top:468px;width:499px;height:8px;background:#9a9a9a;border-radius:4px;"></div>
<svg style="position:absolute;left:806px;top:470px" width="4" height="5" viewBox="0 0 4 5"><path d="M0 0V5L4 2.5Z" fill="#505050"/></svg>
<div style="position:absolute;left:13px;top:497px;font-size:12px;line-height:12px;color:#474747;font-weight:400;letter-spacing:0px;white-space:nowrap;transform:scaleX(0.915);transform-origin:left top;">Комментарий:</div>
<div style="position:absolute;left:90px;top:493px;width:411px;height:20px;box-sizing:border-box;border:1px solid #a6a6a6;border-radius:3px;background:#fff;"></div>
<div style="position:absolute;left:479px;top:493px;width:1px;height:20px;background:#a6a6a6;"></div>
<svg style="position:absolute;left:486px;top:507px" width="9" height="2" viewBox="0 0 9 2"><rect x="0" y="0" width="1" height="1" fill="#333"/><rect x="3" y="0" width="1" height="1" fill="#333"/><rect x="6" y="0" width="1" height="1" fill="#333"/></svg>
<div style="position:absolute;left:650px;top:498px;font-size:12px;line-height:12px;color:#474747;font-weight:400;letter-spacing:0px;white-space:nowrap;transform:scaleX(0.915);transform-origin:left top;">Автор:</div>
<div style="position:absolute;left:686px;top:498px;font-size:12px;line-height:12px;color:#1f4fa8;font-weight:400;letter-spacing:0px;white-space:nowrap;transform:scaleX(0.915);transform-origin:left top;text-decoration:underline;">Жумабаева А.К. (Бухгалтер)</div>
</body></html>
